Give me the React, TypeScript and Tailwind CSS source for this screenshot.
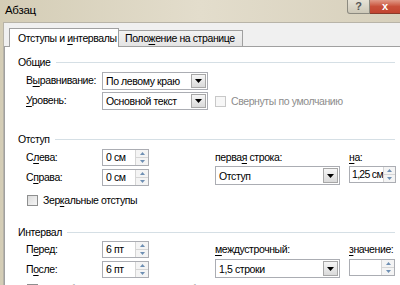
import React from "react";

const F = { fontFamily: '"Liberation Sans", Arial, sans-serif' };

function U({ children }: { children: React.ReactNode }) {
  return <span className="underline underline-offset-2 decoration-1">{children}</span>;
}

const TX = "text-[10.5px] tracking-[-0.4px] text-black whitespace-nowrap";

function Header({ children }: { children: React.ReactNode }) {
  return (
    <div className="flex items-center h-[16px] pl-[13px] pr-[5px]">
      <span className={`${TX} leading-[16px]`}>{children}</span>
      <div className="flex-1 h-px bg-[#d5dfe5] ml-[5px]" />
    </div>
  );
}

function Select({ value, w }: { value: string; w: string }) {
  return (
    <div className={`flex border border-[#abadb3] bg-white ${w}`}>
      <div className={`flex-1 pl-[3px] ${TX} leading-[16px] overflow-hidden flex items-center`}>{value}</div>
      <div className="w-[15px] m-[1px] border border-[#a7a7a7] bg-gradient-to-b from-[#f6f6f6] to-[#dadada] flex items-center justify-center">
        <svg width="7" height="4" viewBox="0 0 7 4">
          <path d="M0 0 L7 0 L3.5 4 Z" fill="#000" />
        </svg>
      </div>
    </div>
  );
}

function Spin({ value, w, tight }: { value: string; w: string; tight?: boolean }) {
  return (
    <div className={`flex h-[17px] border border-[#abadb3] bg-white ${w}`}>
      <div className={`flex-1 ${tight ? "pl-[2px] text-[10.5px] tracking-[-0.7px] text-black whitespace-nowrap" : `pl-[3px] ${TX}`} leading-[15px] overflow-hidden`}>{value}</div>
      <div className={`${tight ? "w-[12px]" : "w-[13px]"} shrink-0 flex flex-col border-l border-[#d5d5d5] bg-[#f4f4f4]`}>
        <div className="flex-1 flex items-center justify-center border-b border-[#d5d5d5]">
          <svg width="5" height="3" viewBox="0 0 5 3">
            <path d="M0 3 L5 3 L2.5 0 Z" fill="#6e8fb3" />
          </svg>
        </div>
        <div className="flex-1 flex items-center justify-center">
          <svg width="5" height="3" viewBox="0 0 5 3">
            <path d="M0 0 L5 0 L2.5 3 Z" fill="#6e8fb3" />
          </svg>
        </div>
      </div>
    </div>
  );
}

function Check({ label, disabled }: { label: React.ReactNode; disabled?: boolean }) {
  return (
    <div className="flex items-center gap-[5px]">
      <div className={`w-[11px] h-[11px] shrink-0 border ${disabled ? "border-[#c8c8c8] bg-[#f7f7f7]" : "border-[#8e8f8f] bg-gradient-to-br from-[#dcdcdc] to-[#f6f6f6]"}`} />
      <span className={`${TX} leading-[16px] ${disabled ? "!text-[#8d8d8d]" : ""}`}>{label}</span>
    </div>
  );
}

const L = `w-[76px] ${TX}`;
const T = `${TX} leading-[16px]`;

export default function App() {
  return (
    <div style={F} className="w-[400px] h-[285px] overflow-hidden bg-gradient-to-r from-[#d4cdb6] via-[#e3ddcc] to-[#d7d0bc] flex flex-col">
      {/* title bar */}
      <div className="h-[22px] shrink-0 flex items-start justify-between">
        <span className="pl-[5px] pt-[2px] text-[11.5px] tracking-[-0.3px] leading-[17px] text-black">Абзац</span>
        <div className="flex">
          <div className="w-[23px] h-[14px] border border-[#8c8a80] border-t-0 rounded-bl-[3px] bg-gradient-to-b from-[#e6e2d6] to-[#cdc8b8] flex items-center justify-center text-[11px] leading-none text-[#555] font-bold">?</div>
          <div className="w-[30px] h-[14px] border-b border-[#8a3a2a] bg-gradient-to-b from-[#e09a88] via-[#c8503a] to-[#c24430] flex items-center justify-center text-[11px] leading-none text-white font-bold">x</div>
        </div>
      </div>
      {/* body */}
      <div className="flex-1 ml-[3px] bg-[#f0f0f0] border-l border-t border-[#b8b4a8] flex flex-col">
        <div className="h-[23px] shrink-0 flex items-end pl-[5px]">
          <div className={`w-[110px] h-[19px] bg-white border border-b-0 border-[#a0a0a0] pl-[8px] ${TX} leading-[18px] -mb-px relative z-10`}>
            Отступы и <U>и</U>нтервалы
          </div>
          <div className={`w-[124px] h-[16px] bg-gradient-to-b from-[#f2f2f2] to-[#e4e4e4] border border-l-0 border-b-0 border-[#a0a0a0] pl-[6px] ${TX} leading-[15px]`}>
            Поло<U>ж</U>ение на странице
          </div>
        </div>
        <div className="flex-1 bg-white border-t border-l border-[#a0a0a0] flex flex-col pt-[7px]">
          <Header>Общие</Header>
          <div className="flex flex-col gap-[2px] pl-[21px] mt-[2px]">
            <div className="flex items-center h-[18px]">
              <span className={L}>В<U>ы</U>равнивание:</span>
              <Select value="По левому краю" w="w-[106px] h-[18px]" />
            </div>
            <div className="flex items-center h-[18px]">
              <span className={L}><U>У</U>ровень:</span>
              <Select value="Основной текст" w="w-[106px] h-[18px]" />
              <div className="ml-[7px]">
                <Check label="Свернуты по умолчанию" disabled />
              </div>
            </div>
          </div>

          <div className="mt-[21px]">
            <Header>Отступ</Header>
          </div>
          <div className="flex pl-[21px] mt-[2px]">
            <div className="flex flex-col gap-[3px] w-[189px]">
              <div className="flex items-center h-[17px]">
                <span className={L}>С<U>л</U>ева:</span>
                <Spin value="0 см" w="w-[47px]" />
              </div>
              <div className="flex items-center h-[17px]">
                <span className={L}>С<U>п</U>рава:</span>
                <Spin value="0 см" w="w-[47px]" />
              </div>
            </div>
            <div className="flex flex-col w-[134px]">
              <span className={T}>перва<U>я</U> строка:</span>
              <Select value="Отступ" w="w-[125px] mt-[1px] h-[19px]" />
            </div>
            <div className="flex flex-col">
              <span className={T}><U>н</U>а:</span>
              <Spin value="1,25 см" w="w-[47px] mt-[1px]" tight />
            </div>
          </div>
          <div className="pl-[22px] mt-[6px]">
            <Check label={<>Зер<U>к</U>альные отступы</>} />
          </div>

          <div className="mt-[16px]">
            <Header>Интервал</Header>
          </div>
          <div className="flex pl-[21px] mt-[1px]">
            <div className="flex flex-col gap-[3px] w-[189px]">
              <div className="flex items-center h-[17px]">
                <span className={L}>П<U>е</U>ред:</span>
                <Spin value="6 пт" w="w-[47px]" />
              </div>
              <div className="flex items-center h-[17px]">
                <span className={L}>П<U>о</U>сле:</span>
                <Spin value="6 пт" w="w-[47px]" />
              </div>
            </div>
            <div className="flex flex-col w-[134px]">
              <span className={T}><U>м</U>еждустрочный:</span>
              <Select value="1,5 строки" w="w-[125px] mt-[2px] h-[19px]" />
            </div>
            <div className="flex flex-col">
              <span className={T}><U>з</U>начение:</span>
              <Spin value="" w="w-[46px] mt-[2px]" />
            </div>
          </div>
          <div className="pl-[22px] mt-[3px]">
            <Check label="Не добавлять интервал между абзацами одного стиля" />
          </div>
        </div>
      </div>
    </div>
  );
}
